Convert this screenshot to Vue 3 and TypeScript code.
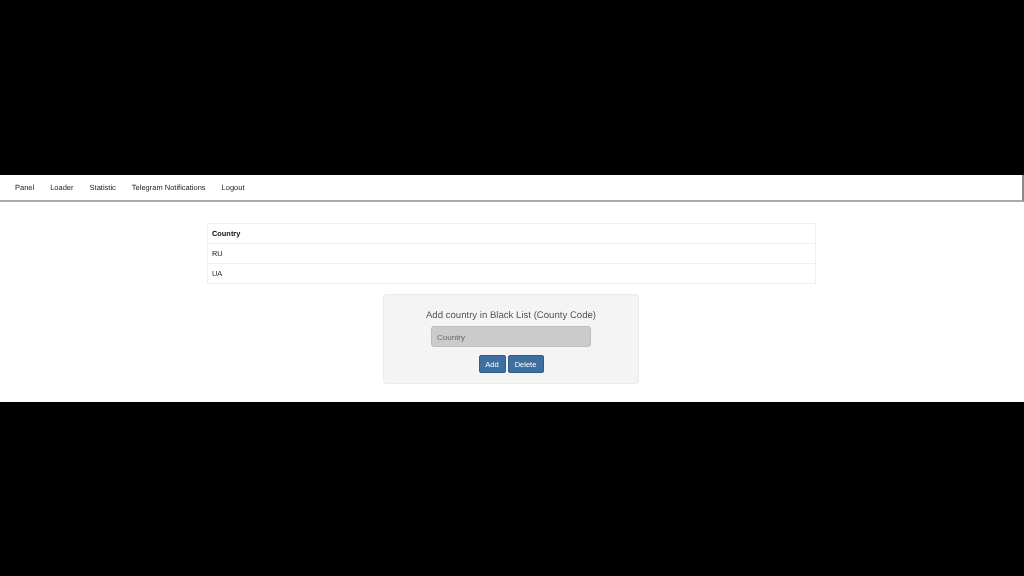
<script setup lang="ts">
const links: string[] = ['Panel', 'Loader', 'Statistic', 'Telegram Notifications', 'Logout']
const countries: string[] = ['RU', 'UA']
</script>

<template>
  <div class="screen">
    <div class="page">
      <nav class="navbar">
        <a v-for="link in links" :key="link" class="nav-link">{{ link }}</a>
      </nav>

      <div class="content">
        <table class="countries">
          <thead>
            <tr><th>Country</th></tr>
          </thead>
          <tbody>
            <tr v-for="c in countries" :key="c"><td>{{ c }}</td></tr>
          </tbody>
        </table>

        <form class="well" @submit.prevent>
          <div class="well-title">Add country in Black List (County Code)</div>
          <input class="country-input" type="text" placeholder="Country" />
          <div class="actions">
            <button class="btn btn-add" type="button">Add</button>
            <button class="btn" type="button">Delete</button>
          </div>
        </form>
      </div>
    </div>
  </div>
</template>

<style scoped>
.screen {
  width: 1024px;
  height: 576px;
  background: #000;
  padding-top: 175px;
  box-sizing: border-box;
  overflow: hidden;
  font-family: "Liberation Sans", Arial, sans-serif;
  text-rendering: geometricPrecision;
}

/* the source is a soft video frame */
.page {
  height: 227px;
  background: #fff;
  filter: blur(0.5px);
}

.navbar {
  height: 25px;
  display: flex;
  align-items: center;
  gap: 16px;
  padding-left: 15px;
  background: #fff;
  border-right: 2px solid #8a8a8a;
  border-bottom: 2px solid #aaa;
  box-sizing: content-box;
  width: 1007px;
  font-size: 7.5px;
  color: #222;
}

.content {
  display: flex;
  flex-direction: column;
  align-items: center;
  padding-top: 21px;
  padding-right: 2px;
}

.countries {
  width: 609px;
  margin-left: 1px;
  border-collapse: collapse;
  font-size: 7.4px;
  color: #222;
}

.countries th,
.countries td {
  height: 20px;
  padding: 0 4px;
  text-align: left;
  border: 1px solid #efefef;
  box-sizing: border-box;
}

.countries th {
  color: #111;
}

.well {
  width: 256px;
  height: 90px;
  margin-top: 10px;
  box-sizing: border-box;
  display: flex;
  flex-direction: column;
  align-items: center;
  background: #f4f4f4;
  border: 1px solid #ebebeb;
  border-radius: 3px;
}

.well-title {
  margin-top: 15px;
  font-size: 9.6px;
  line-height: 12px;
  color: #555;
}

.country-input {
  width: 160px;
  height: 21px;
  margin-top: 4px;
  padding: 1px 5px 0;
  box-sizing: border-box;
  background: #cbcbcb;
  border: 1px solid #bdbdbd;
  border-radius: 3px;
  font: 8px "Liberation Sans", Arial, sans-serif;
  outline: none;
}

.country-input::placeholder {
  color: #666;
  opacity: 1;
}

.actions {
  display: flex;
  gap: 2px;
  margin-top: 8px;
}

.btn {
  height: 18px;
  width: 36px;
  padding: 0;
  background: #3e6f9f;
  border: 1px solid #2f5d8a;
  border-radius: 2px;
  color: #fff;
  font: 7.5px "Liberation Sans", Arial, sans-serif;
}

.btn-add {
  width: 27px;
}
</style>
